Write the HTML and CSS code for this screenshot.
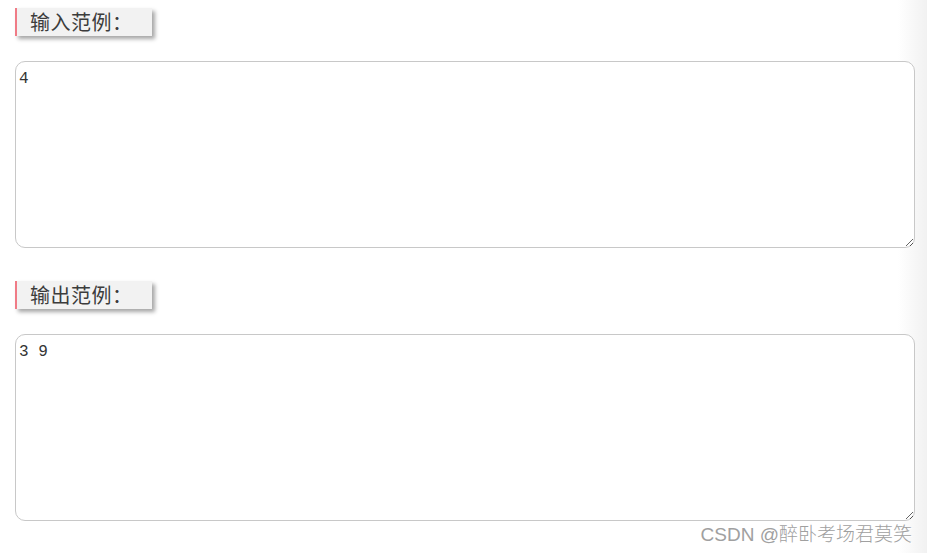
FILE: index.html
```html
<!DOCTYPE html>
<html lang="zh">
<head>
<meta charset="utf-8">
<link rel="stylesheet" href="styles.css">
</head>
<body>
<div class="page">
  <div class="label">输入范例：</div>
  <textarea class="box">4</textarea>
  <div class="label second">输出范例：</div>
  <textarea class="box">3 9</textarea>
</div>
<div class="watermark">CSDN @醉卧考场君莫笑</div>
</body>
</html>
```
FILE: styles.css
```css
html {
  background: linear-gradient(to right, #ffffff 0, #ffffff 898px, #f1f1f1 927px);
  min-height: 100%;
}
body {
  margin: 0;
  position: relative;
  height: 553px;
  overflow: hidden;
  font-family: "Noto Sans CJK SC", "Noto Sans", sans-serif;
}
.page {
  padding: 8px 0 0 15px;
  display: flex;
  flex-direction: column;
  align-items: flex-start;
}
.label {
  box-sizing: border-box;
  width: 137px;
  height: 28px;
  background: #f2f2f2;
  border-left: 2px solid #f07b86;
  box-shadow: 3px 3px 4px rgba(0, 0, 0, 0.35);
  color: #3c3c3c;
  font-size: 20px;
  font-weight: 400;
  line-height: 28px;
  padding-left: 13px;
  letter-spacing: 0.5px;
}
.label.second {
  margin-top: 33px;
}
.box {
  display: block;
  box-sizing: border-box;
  margin-top: 25px;
  width: 900px;
  height: 187px;
  border: 1px solid #c8c8c8;
  border-radius: 10px;
  padding: 8px 3px;
  font-family: "Liberation Mono", "DejaVu Sans Mono", monospace;
  font-size: 16px;
  color: #333;
  background: #fff;
  resize: both;
  outline: none;
}
.watermark {
  position: absolute;
  right: 15px;
  top: 519px;
  font-size: 19px;
  font-weight: 300;
  color: #a0a0a0;
  text-shadow: 1px 1px 0 #fff;
  font-family: "Liberation Sans", "Noto Sans CJK SC", sans-serif;
}
```
